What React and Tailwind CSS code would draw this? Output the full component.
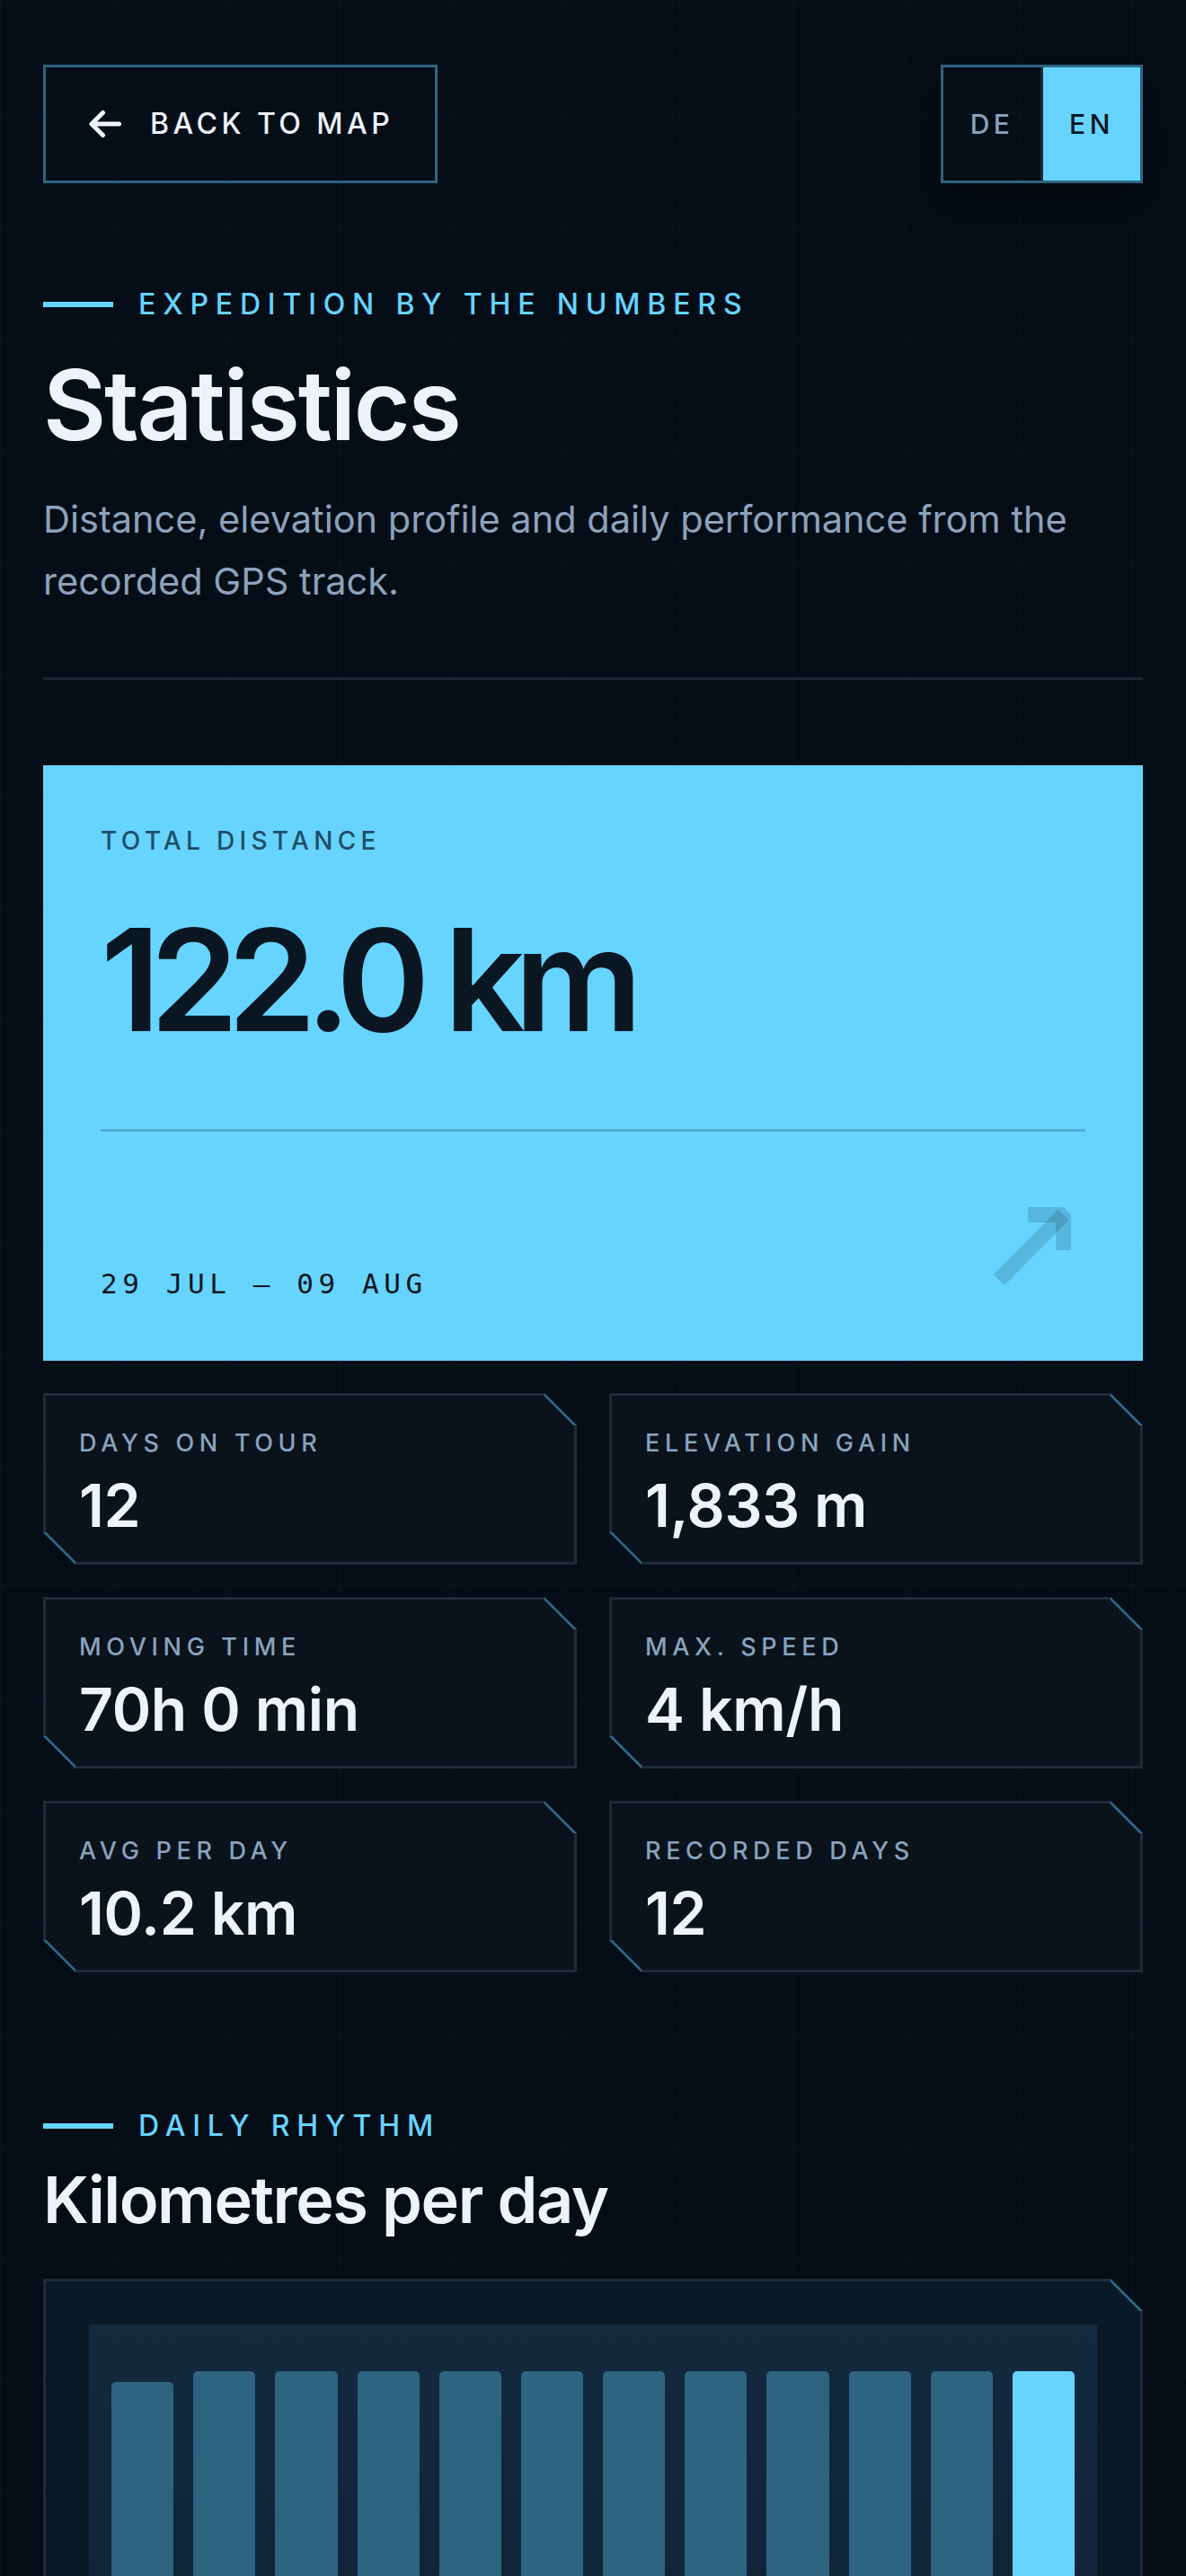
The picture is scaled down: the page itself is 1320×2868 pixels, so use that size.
import React from 'react';

const stats = [
  { label: 'DAYS ON TOUR', value: '12' },
  { label: 'ELEVATION GAIN', value: '1,833 m' },
  { label: 'MOVING TIME', value: '70h 0 min' },
  { label: 'MAX. SPEED', value: '4 km/h' },
  { label: 'AVG PER DAY', value: '10.2 km' },
  { label: 'RECORDED DAYS', value: '12' },
];

const days = [
  { d: '29.07', km: 9.9 },
  { d: '30.07', km: 10.2 },
  { d: '31.07', km: 10.2 },
  { d: '01.08', km: 10.2 },
  { d: '02.08', km: 10.2 },
  { d: '03.08', km: 10.2 },
  { d: '04.08', km: 10.2 },
  { d: '05.08', km: 10.2 },
  { d: '06.08', km: 10.2 },
  { d: '07.08', km: 10.2 },
  { d: '08.08', km: 10.2 },
  { d: '09.08', km: 10.2 },
];

const SectionLabel = ({ children }) => (
  <div className="flex items-center gap-[28px]">
    <span className="h-[6px] w-[78px] bg-[#66d4ff]"></span>
    <span className="text-[32px] font-medium leading-none tracking-[0.245em] text-[#66d4ff]">
      {children}
    </span>
  </div>
);

// clipped panel: grey frame, blue diagonal edges on the cut corners
const Notched = ({ children, innerClass }) => (
  <div className="relative bg-[#1f2b37] p-[3px] [clip-path:polygon(0_0,calc(100%_-_36px)_0,100%_36px,100%_100%,36px_100%,0_calc(100%_-_36px))]">
    <div className={`${innerClass} [clip-path:polygon(0_0,calc(100%_-_34px)_0,100%_34px,100%_100%,34px_100%,0_calc(100%_-_34px))]`}>
      {children}
    </div>
    <svg className="absolute right-0 top-0 h-[36px] w-[36px]" viewBox="0 0 36 36">
      <line x1="0" y1="0" x2="36" y2="36" stroke="#2d6a88" strokeWidth="5" />
    </svg>
    <svg className="absolute bottom-0 left-0 h-[36px] w-[36px]" viewBox="0 0 36 36">
      <line x1="0" y1="0" x2="36" y2="36" stroke="#2d6a88" strokeWidth="5" />
    </svg>
  </div>
);

const StatCard = ({ label, value }) => (
  <Notched innerClass="bg-[#0a121c] px-[37px] pt-[39px] pb-[30px]">
    <div className="text-[27px] font-medium leading-none tracking-[0.21em] text-[#8aa3bc]">{label}</div>
    <div className="mt-[23px] text-[66px] font-semibold leading-none tracking-[-0.005em] text-[#eef3fb]">{value}</div>
  </Notched>
);

export default function App() {
  const max = Math.max(...days.map((x) => x.km));

  return (
    <div className="min-h-screen bg-[#050d17] bg-[linear-gradient(to_right,rgba(110,190,255,0.035)_1px,transparent_1px),linear-gradient(to_bottom,rgba(110,190,255,0.035)_1px,transparent_1px)] bg-[size:126px_126px] font-['Inter',sans-serif]">
      <div className="px-[48px] pt-[72px] pb-[120px]">
        {/* top bar */}
        <div className="flex items-start justify-between">
          <button className="flex h-[132px] items-center gap-[32px] border-[3px] border-[#2d6480] pl-[48px] pr-[46px] text-[#eef3fb]">
            <svg width="36" height="32" viewBox="0 0 36 32" fill="none" stroke="currentColor" strokeWidth="5" strokeLinecap="round" strokeLinejoin="round">
              <path d="M33.5 16H3M15.5 3.5L3 16l12.5 12.5" />
            </svg>
            <span className="text-[32px] font-medium leading-none tracking-[0.14em]">BACK TO MAP</span>
          </button>
          <div className="flex h-[132px] border-[3px] border-[#2d6480] shadow-[0_24px_48px_rgba(0,0,0,0.45)]">
            <div className="flex w-[108px] items-center justify-center text-[30px] font-medium leading-none tracking-[0.15em] text-[#8aa3bc]">
              DE
            </div>
            <div className="flex w-[111px] items-center justify-center border-l-[3px] border-[#1e2a35] bg-[#66d4ff] text-[30px] font-medium leading-none tracking-[0.15em] text-[#0a1622]">
              EN
            </div>
          </div>
        </div>

        {/* heading */}
        <div className="mt-[119px]">
          <SectionLabel>EXPEDITION BY THE NUMBERS</SectionLabel>
        </div>
        <h1 className="mt-[42px] text-[108px] font-semibold leading-none tracking-[-0.02em] text-[#eef3fb]">Statistics</h1>
        <p className="mt-[39px] text-[41.5px] leading-[69px] text-[#8da2ba]">
          Distance, elevation profile and daily performance from the recorded GPS track.
        </p>
        <div className="mt-[72px] h-[3px] bg-[#1a2532]"></div>

        {/* total distance */}
        <div className="mt-[95px] bg-[#66d4ff] px-[64px] pt-[70px] pb-[70px] text-[#0a1622]">
          <div className="text-[28px] font-medium leading-none tracking-[0.19em] text-[#1e4f68]">TOTAL DISTANCE</div>
          <div className="mt-[62px] text-[158px] font-semibold leading-none tracking-[-0.075em]">122.0 km</div>
          <div className="mt-[87px] h-[3px] bg-[#52acd2]"></div>
          <div className="mt-[76px] flex items-end justify-between">
            <span className="font-['DejaVu_Sans_Mono',monospace] text-[31px] leading-none tracking-[0.18em]">
              29 JUL — 09 AUG
            </span>
            <svg width="108" height="109" viewBox="0 0 108 109" fill="none" stroke="#0a1622" strokeOpacity="0.15" strokeWidth="17">
              <path d="M44 16.5H83.5V56" strokeLinejoin="bevel" />
              <path d="M83.5 16.5L12 89" />
            </svg>
          </div>
        </div>

        {/* stat grid */}
        <div className="mt-[36px] grid grid-cols-2 gap-[36px]">
          {stats.map((s) => (
            <StatCard key={s.label} label={s.label} value={s.value} />
          ))}
        </div>

        {/* daily rhythm */}
        <div className="mt-[155px]">
          <SectionLabel>DAILY RHYTHM</SectionLabel>
        </div>
        <h2 className="mt-[30px] text-[72px] font-semibold leading-none tracking-[-0.02em] text-[#eef3fb]">Kilometres per day</h2>

        <div className="mt-[52px]">
          <Notched innerClass="bg-[#0a1928] p-[48px]">
            <div className="bg-[linear-gradient(to_bottom,#13293e,#0f2235)] px-[25px] pt-[52px] pb-[30px]">
              <div className="flex h-[420px] items-end gap-[22px]">
                {days.map((x, i) => (
                  <div
                    key={x.d}
                    title={x.d}
                    className={`flex-1 rounded-t-[5px] ${i === days.length - 1 ? 'bg-[#66d4ff]' : 'bg-[#2d6480]'}`}
                    style={{ height: `${(x.km / max) * 100}%` }}
                  ></div>
                ))}
              </div>
            </div>
          </Notched>
        </div>
      </div>
    </div>
  );
}
